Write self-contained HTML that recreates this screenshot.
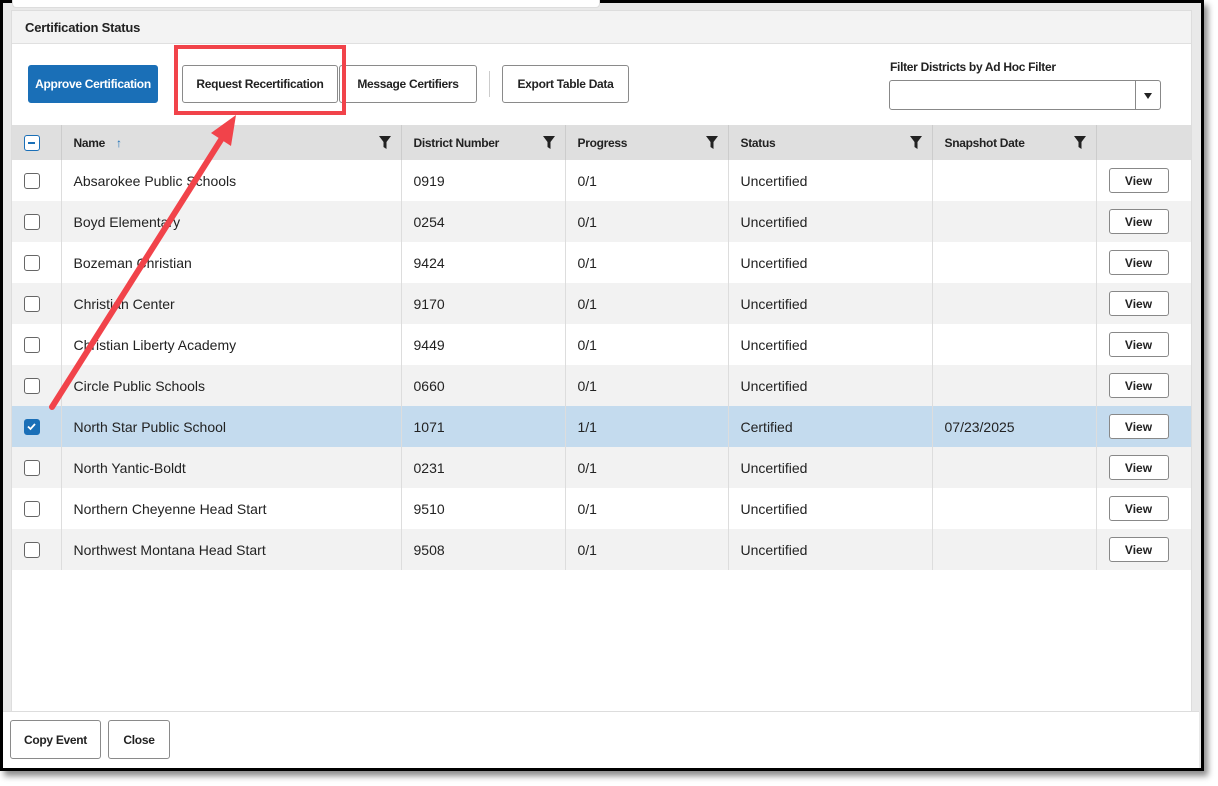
<!DOCTYPE html>
<html><head><style>
*{box-sizing:border-box;margin:0;padding:0}
body{width:1218px;height:786px;background:#fff;font-family:"Liberation Sans",Arial,sans-serif;position:relative;overflow:hidden;color:#222}
.frame{position:absolute;left:0;top:0;width:1204px;height:771px;border:3px solid #000;background:#e9e9e9;box-shadow:4px 5px 6px rgba(0,0,0,.45)}
.tab{position:absolute;left:12px;top:0;width:588px;height:8px;background:#fff;border:1px solid #ddd;border-top:none;border-radius:0 0 4px 4px}
.panel{position:absolute;left:11px;top:10px;width:1181px;height:702px;background:#fff;border:1px solid #ddd}
.hdr{height:33px;background:#f3f3f3;border-bottom:1px solid #e0e0e0;font-weight:bold;font-size:13px;padding:9px 0 0 13px;letter-spacing:-.2px}
.btn{position:absolute;height:38px;border:1px solid #8a8a8a;border-radius:3px;background:#fff;font-size:12px;font-weight:bold;display:flex;align-items:center;justify-content:center;letter-spacing:-.3px}
.blue{background:#1a6fb7;border-color:#1a6fb7;color:#fff}
table{position:absolute;left:0;top:114px;width:1179px;border-collapse:collapse;font-size:14px}
th{height:35px;background:#dfdfdf;text-align:left;font-size:12px;font-weight:bold;padding-left:12px;position:relative;border-left:1px solid #ccc;letter-spacing:-.3px}
td{height:41px;padding-left:12px;border-left:1px solid #ddd}
th:first-child,td:first-child{border-left:none;padding-left:12px}
tr:nth-child(odd) td{background:#f2f2f2}
tr.sel td{background:#c4dbee}
.cb{width:16px;height:16px;border:1.5px solid #666;border-radius:3px;background:#fff}
.cbc{background:#1a6fb7;border-color:#1a6fb7;position:relative}
.fil{position:absolute;right:10px;top:11px}
.view{width:60px;height:25px;border:1px solid #888;border-radius:3px;font-size:12px;font-weight:bold;display:flex;align-items:center;justify-content:center;background:#fff}
.foot{position:absolute;left:3px;top:711px;width:1196px;height:57px;background:#fff;border-top:1px solid #ddd}
</style></head><body>
<div class="frame"></div>
<div class="tab"></div>
<div class="panel">
<div class="hdr">Certification Status</div>
<div class="btn blue" style="left:16px;top:54px;width:130px">Approve Certification</div>
<div class="btn" style="left:170px;top:54px;width:156px">Request Recertification</div>
<div class="btn" style="left:327px;top:54px;width:138px">Message Certifiers</div>
<div style="position:absolute;left:477px;top:60px;width:1px;height:26px;background:#ccc"></div>
<div class="btn" style="left:490px;top:54px;width:127px">Export Table Data</div>
<div style="position:absolute;left:878px;top:49px;font-size:12px;font-weight:bold;letter-spacing:-.3px">Filter Districts by Ad Hoc Filter</div>
<div style="position:absolute;left:877px;top:69px;width:272px;height:30px;border:1px solid #888;border-radius:3px"><div style="position:absolute;right:24px;top:0;width:1px;height:28px;background:#888"></div><div style="position:absolute;right:8px;top:12px;border:4px solid transparent;border-top:6px solid #222;border-bottom:none"></div></div>
<table>
<tr><th style="width:49px"><div class="cb" style="border-color:#1a6fb7;position:relative"><div style="position:absolute;left:3px;top:6px;width:7px;height:2px;background:#1a6fb7"></div></div></th>
<th style="width:340px">Name <span style="color:#1a6fb7;margin-left:8px">↑</span><svg class="fil" width="12" height="13" viewBox="0 0 12 13"><path d="M0 0H12L7.5 6V13L4.5 11V6Z" fill="#222"/></svg></th>
<th style="width:164px">District Number<svg class="fil" width="12" height="13" viewBox="0 0 12 13"><path d="M0 0H12L7.5 6V13L4.5 11V6Z" fill="#222"/></svg></th>
<th style="width:163px">Progress<svg class="fil" width="12" height="13" viewBox="0 0 12 13"><path d="M0 0H12L7.5 6V13L4.5 11V6Z" fill="#222"/></svg></th>
<th style="width:204px">Status<svg class="fil" width="12" height="13" viewBox="0 0 12 13"><path d="M0 0H12L7.5 6V13L4.5 11V6Z" fill="#222"/></svg></th>
<th style="width:164px">Snapshot Date<svg class="fil" width="12" height="13" viewBox="0 0 12 13"><path d="M0 0H12L7.5 6V13L4.5 11V6Z" fill="#222"/></svg></th>
<th></th></tr>
<tr><td><div class="cb"></div></td><td>Absarokee Public Schools</td><td>0919</td><td>0/1</td><td>Uncertified</td><td></td><td><div class="view">View</div></td></tr>
<tr><td><div class="cb"></div></td><td>Boyd Elementary</td><td>0254</td><td>0/1</td><td>Uncertified</td><td></td><td><div class="view">View</div></td></tr>
<tr><td><div class="cb"></div></td><td>Bozeman Christian</td><td>9424</td><td>0/1</td><td>Uncertified</td><td></td><td><div class="view">View</div></td></tr>
<tr><td><div class="cb"></div></td><td>Christian Center</td><td>9170</td><td>0/1</td><td>Uncertified</td><td></td><td><div class="view">View</div></td></tr>
<tr><td><div class="cb"></div></td><td>Christian Liberty Academy</td><td>9449</td><td>0/1</td><td>Uncertified</td><td></td><td><div class="view">View</div></td></tr>
<tr><td><div class="cb"></div></td><td>Circle Public Schools</td><td>0660</td><td>0/1</td><td>Uncertified</td><td></td><td><div class="view">View</div></td></tr>
<tr class="sel"><td><div class="cb cbc"><svg width="13" height="13" viewBox="0 0 13 13" style="position:absolute;left:0;top:0"><path d="M3 6.5L5.5 9L10 4" stroke="#fff" stroke-width="1.8" fill="none"/></svg></div></td><td>North Star Public School</td><td>1071</td><td>1/1</td><td>Certified</td><td>07/23/2025</td><td><div class="view">View</div></td></tr>
<tr><td><div class="cb"></div></td><td>North Yantic-Boldt</td><td>0231</td><td>0/1</td><td>Uncertified</td><td></td><td><div class="view">View</div></td></tr>
<tr><td><div class="cb"></div></td><td>Northern Cheyenne Head Start</td><td>9510</td><td>0/1</td><td>Uncertified</td><td></td><td><div class="view">View</div></td></tr>
<tr><td><div class="cb"></div></td><td>Northwest Montana Head Start</td><td>9508</td><td>0/1</td><td>Uncertified</td><td></td><td><div class="view">View</div></td></tr>
</table>
</div>
<div class="foot">
<div class="btn" style="left:7px;top:8px;width:91px;height:39px">Copy Event</div>
<div class="btn" style="left:105px;top:8px;width:62px;height:39px">Close</div>
</div>
<svg width="1218" height="786" style="position:absolute;left:0;top:0">
<rect x="176" y="47" width="168" height="66" fill="none" stroke="#f1434a" stroke-width="4"/>
<line x1="52" y1="407" x2="224" y2="135" stroke="#f1434a" stroke-width="6" stroke-linecap="round"/>
<polygon points="236,115 211,133 231,146" fill="#f1434a"/>
</svg>
</body></html>
